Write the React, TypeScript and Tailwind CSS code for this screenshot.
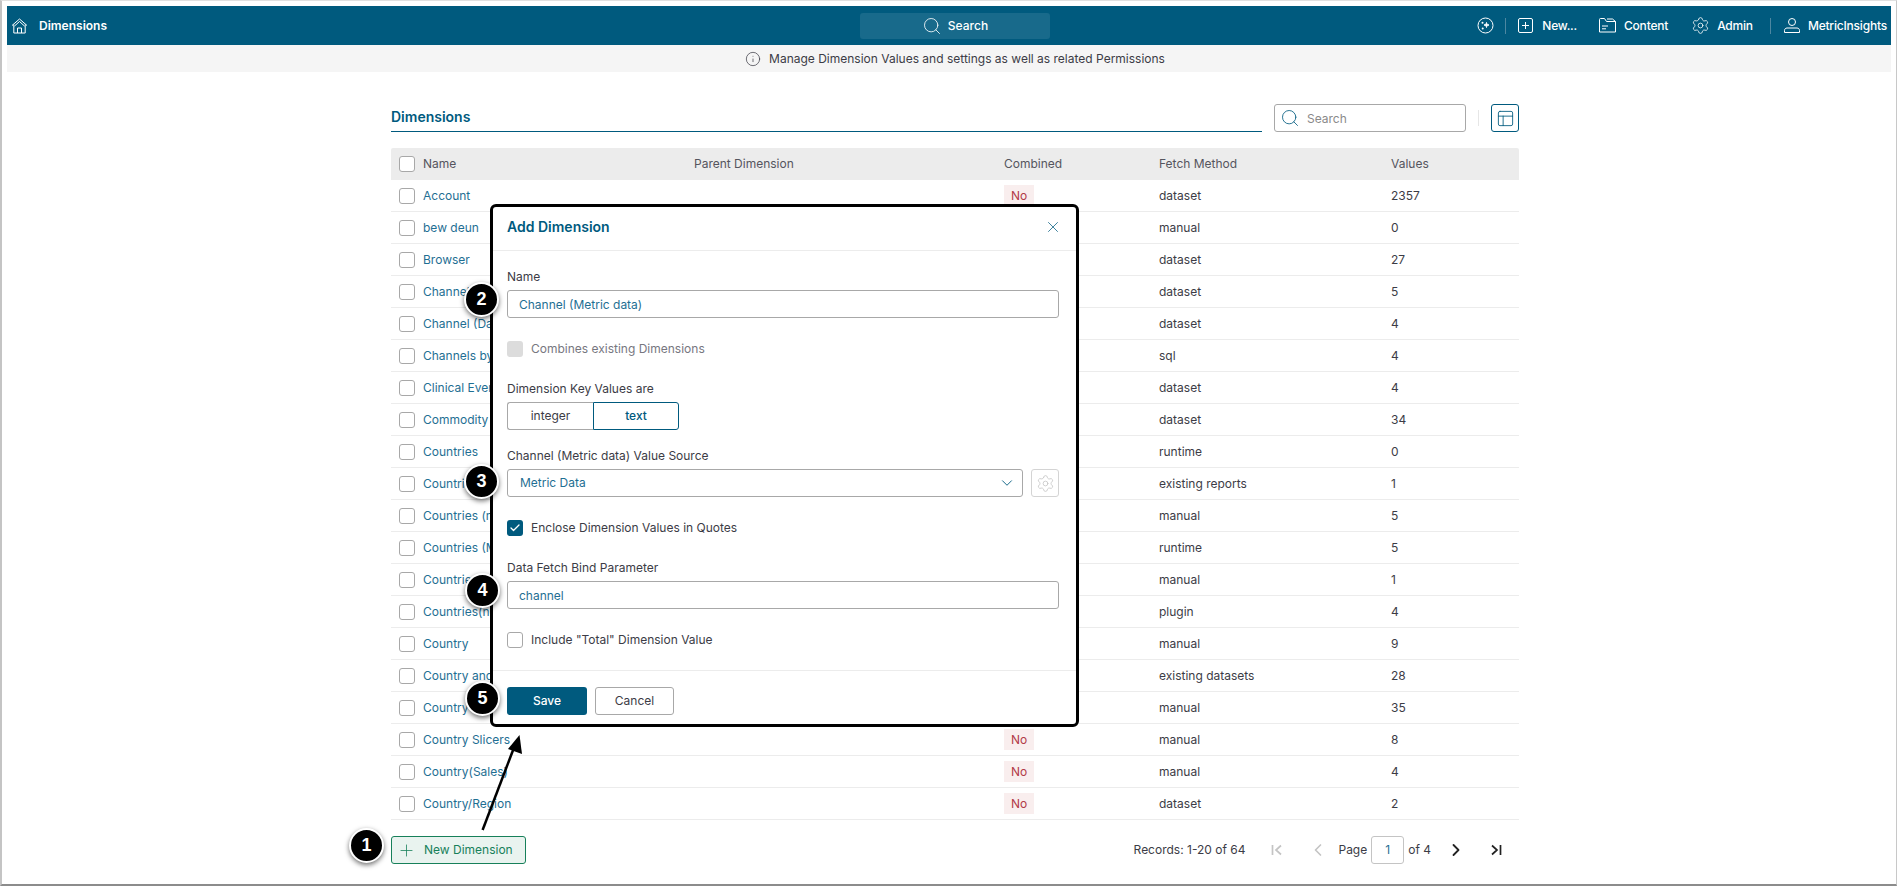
import React from "react";
import { Search, Info, X, ChevronDown, Plus, PanelsTopLeft, Settings, ChevronLeft, ChevronRight, Check } from "lucide-react";

const rows: [string, string, string][] = [
  ["Account", "dataset", "2357"],
  ["bew deun", "manual", "0"],
  ["Browser", "dataset", "27"],
  ["Channel", "dataset", "5"],
  ["Channel (Dataset)", "dataset", "4"],
  ["Channels by Region", "sql", "4"],
  ["Clinical Events", "dataset", "4"],
  ["Commodity Types", "dataset", "34"],
  ["Countries", "runtime", "0"],
  ["Countries All", "existing reports", "1"],
  ["Countries (manual)", "manual", "5"],
  ["Countries (Multi)", "runtime", "5"],
  ["Countries List", "manual", "1"],
  ["Countries(new)", "plugin", "4"],
  ["Country", "manual", "9"],
  ["Country and Region", "existing datasets", "28"],
  ["Country Name", "manual", "35"],
  ["Country Slicers", "manual", "8"],
  ["Country(Sales)", "manual", "4"],
  ["Country/Region", "dataset", "2"],
];

const font = { fontFamily: "Inter, 'Noto Sans', sans-serif" };

function Box() {
  return <span className="block w-4 h-4 shrink-0 rounded-[3px] border border-[#a8a8a8] bg-white" />;
}

function Home() {
  return (
    <svg width="17" height="16" viewBox="0 0 17 16" fill="none" stroke="white" strokeWidth="1">
      <path d="M1 7.5 8.5 1 16 7.5" />
      <path d="M2.8 6.5V15h11.4V6.5" />
      <path d="M6.5 15v-5h4v5" />
      <path d="M3.5 8 8.5 3.5 13.5 8" />
    </svg>
  );
}

function Magic() {
  return (
    <svg width="17" height="17" viewBox="0 0 17 17" fill="none" stroke="white" strokeWidth="1">
      <circle cx="8.5" cy="8.5" r="7.5" />
      <path d="M9.5 5.5c.3 1.6.9 2.2 2.5 2.5-1.6.3-2.2.9-2.5 2.5-.3-1.6-.9-2.2-2.5-2.5 1.6-.3 2.2-.9 2.5-2.5Z" fill="white" />
      <circle cx="5.5" cy="5.7" r="1" fill="white" stroke="none" />
      <circle cx="5.7" cy="11.6" r="1" fill="white" stroke="none" />
    </svg>
  );
}

function NewSquare() {
  return (
    <svg width="15" height="15" viewBox="0 0 15 15" fill="none" stroke="white" strokeWidth="1">
      <rect x="0.5" y="0.5" width="14" height="14" rx="1.5" />
      <path d="M7.5 4v7M4 7.5h7" />
    </svg>
  );
}

function Folder() {
  return (
    <svg width="17" height="15" viewBox="0 0 17 15" fill="none" stroke="white" strokeWidth="1">
      <path d="M.5 14V1.5a1 1 0 0 1 1-1h4l2 3h9v10.5h-16Z" />
      <path d="M8 1h5.500l3 2.500" />
      <path d="M3 8h6M3 10.800h4" />
    </svg>
  );
}

function Person() {
  return (
    <svg width="16" height="15" viewBox="0 0 16 15" fill="none" stroke="white" strokeWidth="1">
      <circle cx="8" cy="4" r="3.5" />
      <path d="M.5 14.500v-2c0-1.400 1.100-2.500 2.500-2.500h10c1.400 0 2.500 1.100 2.500 2.500v2h-15Z" />
    </svg>
  );
}

function Sep() {
  return <span className="block w-px h-4 bg-[#4d87a1]" />;
}

function FirstPage({ color }: { color: string }) {
  return (
    <svg width="12" height="12" viewBox="0 0 12 12" fill="none" stroke={color} strokeWidth="1.7">
      <path d="M1.500 1v10M10 1.500 5 6l5 4.500" />
    </svg>
  );
}

function LastPage({ color }: { color: string }) {
  return (
    <svg width="12" height="12" viewBox="0 0 12 12" fill="none" stroke={color} strokeWidth="1.7">
      <path d="M10.500 1v10M2 1.500 7 6l-5 4.500" />
    </svg>
  );
}

function Step({ n, pos }: { n: number; pos: string }) {
  return (
    <div
      className={`absolute ${pos} w-[35px] h-[35px] rounded-full bg-black border-2 border-white shadow-[0_2px_5px_rgba(0,0,0,0.55)] flex items-center justify-center text-white text-[18px] font-bold`}
      style={{ fontFamily: "'Liberation Sans', sans-serif" }}
    >
      {n}
    </div>
  );
}

function Label({ children, className = "" }: { children: React.ReactNode; className?: string }) {
  return <div className={`h-4 leading-4 text-[12px] text-[#3c3c46] ${className}`}>{children}</div>;
}

function Field({ value }: { value: string }) {
  return (
    <div className="mt-[5px] h-7 rounded-[3px] border border-[#a8a8a8] px-[11px] pt-[1px] flex items-center text-[12px] text-[#1f6f93]">
      {value}
    </div>
  );
}

export default function App() {
  return (
    <div className="relative w-[1898px] h-[888px] bg-white overflow-hidden" style={font}>
      <div className="w-[1897px] h-[886px] border-l-2 border-r border-t border-b-2 border-l-[#c4c4c4] border-r-[#c8c8c8] border-t-[#e0e0e0] border-b-[#8c8c8c] pl-[5px] pt-[5px] pr-[5px] flex flex-col">
        {/* Top bar */}
        <header className="h-[39px] bg-[#005a7e] flex items-center text-white text-[12px] font-medium shrink-0">
          <div className="w-[853px] flex items-center pl-[4px]">
            <Home />
            <span className="ml-[11px] font-semibold">Dimensions</span>
          </div>
          <div className="w-[190px] h-[26px] rounded-[3px] bg-[#186a8b] flex items-center justify-center gap-[6px]">
            <Search size={20} strokeWidth={1} />
            <span>Search</span>
          </div>
          <div className="flex-1 flex items-center justify-end pr-[4px] tracking-[-0.2px]">
            <Magic />
            <span className="ml-[11px]"><Sep /></span>
            <span className="ml-[12px]"><NewSquare /></span>
            <span className="ml-[9px]">New...</span>
            <span className="ml-[22px]"><Folder /></span>
            <span className="ml-[8px]">Content</span>
            <span className="ml-[23px]"><Settings size={19} strokeWidth={1} /></span>
            <span className="ml-[7px]">Admin</span>
            <span className="ml-[17px]"><Sep /></span>
            <span className="ml-[13px]"><Person /></span>
            <span className="ml-[8px]">MetricInsights</span>
          </div>
        </header>

        {/* Info bar */}
        <div className="h-[27px] bg-[#f5f5f5] flex items-center justify-center gap-2 text-[12px] text-[#3c3c46] shrink-0 pl-3">
          <Info size={16} strokeWidth={1.1} />
          <span>Manage Dimension Values and settings as well as related Permissions</span>
        </div>

        {/* Main */}
        <main className="ml-[384px] w-[1128px] pt-8">
          <div className="flex items-stretch h-7">
            <div className="w-[871px] border-b border-[#005a7e] text-[14px] leading-[26px] font-semibold text-[#005a7e]">
              Dimensions
            </div>
            <div className="ml-3 w-[192px] rounded-[3px] border border-[#a8a8a8] flex items-center px-[5px] gap-[7px] text-[12px] text-[#8a8a8a]">
              <Search size={20} strokeWidth={1} className="text-[#005a7e]" />
              <span className="pt-[1px]">Search</span>
            </div>
            <div className="ml-3 mr-3 my-[6px] w-px bg-[#e6e6e6]" />
            <div className="w-7 rounded-[3px] border border-[#005a7e] flex items-center justify-center text-[#005a7e]">
              <PanelsTopLeft size={19} strokeWidth={1.1} />
            </div>
          </div>

          <div className="mt-4 text-[12px] text-[#3c3c46]">
            <div className="h-8 rounded-t-[2px] bg-[#ececec] grid grid-cols-[303px_310px_155px_232px_1fr] items-center text-[#55555e]">
              <div className="flex items-center gap-2 pl-2"><Box /><span>Name</span></div>
              <div>Parent Dimension</div>
              <div>Combined</div>
              <div>Fetch Method</div>
              <div>Values</div>
            </div>
            {rows.map(([name, method, value]) => (
              <div key={name} className="h-8 border-b border-[#ececec] grid grid-cols-[303px_310px_155px_232px_1fr] items-center">
                <div className="flex items-center gap-2 pl-2"><Box /><span className="text-[#1f6f93]">{name}</span></div>
                <div />
                <div><span className="inline-flex h-[21px] px-[7px] items-center bg-[#f9eeee] text-[#b23a48]">No</span></div>
                <div>{method}</div>
                <div>{value}</div>
              </div>
            ))}
          </div>

          <div className="mt-4 flex items-center justify-between text-[12px] text-[#3c3c46]">
            <div className="w-[135px] h-7 rounded-[3px] border border-[#17805a] bg-[#e9f3ef] flex items-center pl-[5px] gap-2 text-[#17805a]">
              <Plus size={19} strokeWidth={1} />
              <span>New Dimension</span>
            </div>
            <div className="flex items-center pr-[17px]">
              <span>Records: 1-20 of 64</span>
              <span className="ml-[26px]"><FirstPage color="#c4c4c4" /></span>
              <span className="ml-[25px]"><ChevronLeft size={20} strokeWidth={2} className="text-[#c4c4c4]" /></span>
              <span className="ml-[10px]">Page</span>
              <span className="ml-1 w-[33px] h-7 rounded-[3px] border border-[#c4c4c4] flex items-center justify-center text-[#1f6f93]">1</span>
              <span className="ml-1">of 4</span>
              <span className="ml-[15px]"><ChevronRight size={20} strokeWidth={2.2} className="text-[#222]" /></span>
              <span className="ml-[24px]"><LastPage color="#222" /></span>
            </div>
          </div>
        </main>
      </div>

      {/* Dialog */}
      <div className="absolute left-[490px] top-[204px] w-[589px] h-[523px] bg-white border-[3px] border-black rounded-[6px] text-[12px] text-[#3c3c46]">
        <div className="h-[44px] border-b border-[#ececec] pl-[14px] pr-[17px] pb-1 flex items-center justify-between">
          <span className="text-[14px] font-semibold text-[#005a7e]">Add Dimension</span>
          <X size={18} strokeWidth={1} className="text-[#005a7e] mr-[-3px]" />
        </div>
        <div className="pl-[14px] pr-[17px] pt-[18px]">
          <Label>Name</Label>
          <Field value="Channel (Metric data)" />
          <div className="mt-[23px] flex items-center gap-2 h-4 text-[#77777f]">
            <span className="block w-4 h-4 rounded-[3px] bg-[#dcdcdc]" />
            <span>Combines existing Dimensions</span>
          </div>
          <Label className="mt-6">Dimension Key Values are</Label>
          <div className="mt-[5px] flex h-7 w-[172px]">
            <div className="w-[86px] rounded-l-[3px] border border-r-0 border-[#a8a8a8] flex items-center justify-center">integer</div>
            <div className="w-[86px] rounded-r-[3px] border border-[#005a7e] flex items-center justify-center font-medium text-[#005a7e]">text</div>
          </div>
          <Label className="mt-[18px]">Channel (Metric data) Value Source</Label>
          <div className="mt-[5px] flex gap-2 h-7">
            <div className="flex-1 rounded-[3px] border border-[#a8a8a8] pl-[12px] pr-[6px] flex items-center justify-between text-[#1f6f93]">
              <span>Metric Data</span>
              <ChevronDown size={18} strokeWidth={1.2} className="text-[#005a7e]" />
            </div>
            <div className="w-7 rounded-[3px] border border-[#d4d4d4] flex items-center justify-center text-[#c4c4c4]">
              <Settings size={19} strokeWidth={1} />
            </div>
          </div>
          <div className="mt-[23px] flex items-center gap-2 h-4">
            <span className="w-4 h-4 rounded-[3px] bg-[#005a7e] flex items-center justify-center text-white">
              <Check size={12} strokeWidth={2.6} />
            </span>
            <span>Enclose Dimension Values in Quotes</span>
          </div>
          <Label className="mt-6">Data Fetch Bind Parameter</Label>
          <Field value="channel" />
          <div className="mt-[23px] flex items-center gap-2 h-4">
            <Box />
            <span>Include "Total" Dimension Value</span>
          </div>
        </div>
        <div className="mt-[22px] border-t border-[#ececec] pl-[14px] pt-4 flex gap-2">
          <div className="w-[80px] h-7 rounded-[3px] bg-[#005a7e] text-white font-medium flex items-center justify-center">Save</div>
          <div className="w-[79px] h-7 rounded-[3px] border border-[#a8a8a8] flex items-center justify-center">Cancel</div>
        </div>
      </div>

      {/* Callouts */}
      <Step n={1} pos="left-[349px] top-[828px]" />
      <Step n={2} pos="left-[464px] top-[282px]" />
      <Step n={3} pos="left-[464px] top-[464px]" />
      <Step n={4} pos="left-[465px] top-[573px]" />
      <Step n={5} pos="left-[465px] top-[681px]" />
      <svg className="absolute left-[470px] top-[725px]" width="60" height="115" viewBox="0 0 60 115" fill="none">
        <path d="M12.600 105 45 20" stroke="black" strokeWidth="2.500" />
        <path d="M49.500 10 52 29 38 24Z" fill="black" />
      </svg>
    </div>
  );
}
